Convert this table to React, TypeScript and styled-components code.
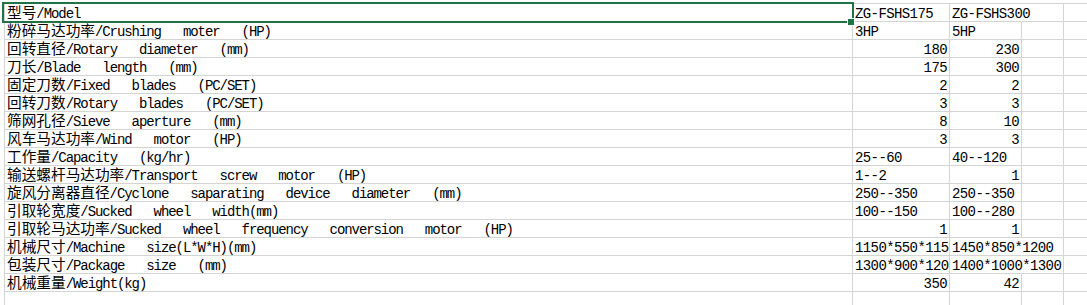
import React from "react";
import styled, { createGlobalStyle } from "styled-components";

const GRID = "#d4d4d4";
const EXCEL_GREEN = "#217346";

const GlobalStyle = createGlobalStyle`
  html, body {
    margin: 0;
    padding: 0;
    background: #ffffff;
    overflow: hidden;
  }
`;

type Align = "left" | "right";

interface SpecRow {
  cn: string;
  en: string;
  a: string;
  b: string;
  alignA?: Align;
  alignB?: Align;
}

const rows: SpecRow[] = [
  { cn: "型号", en: "/Model", a: "ZG-FSHS175", b: "ZG-FSHS300" },
  { cn: "粉碎马达功率", en: "/Crushing   moter   (HP)", a: "3HP", b: "5HP" },
  { cn: "回转直径", en: "/Rotary   diameter   (mm)", a: "180", b: "230", alignA: "right", alignB: "right" },
  { cn: "刀长", en: "/Blade   length   (mm)", a: "175", b: "300", alignA: "right", alignB: "right" },
  { cn: "固定刀数", en: "/Fixed   blades   (PC/SET)", a: "2", b: "2", alignA: "right", alignB: "right" },
  { cn: "回转刀数", en: "/Rotary   blades   (PC/SET)", a: "3", b: "3", alignA: "right", alignB: "right" },
  { cn: "筛网孔径", en: "/Sieve   aperture   (mm)", a: "8", b: "10", alignA: "right", alignB: "right" },
  { cn: "风车马达功率", en: "/Wind   motor   (HP)", a: "3", b: "3", alignA: "right", alignB: "right" },
  { cn: "工作量", en: "/Capacity   (kg/hr)", a: "25--60", b: "40--120" },
  { cn: "输送螺杆马达功率", en: "/Transport   screw   motor   (HP)", a: "1--2", b: "1", alignB: "right" },
  { cn: "旋风分离器直径", en: "/Cyclone   saparating   device   diameter   (mm)", a: "250--350", b: "250--350" },
  { cn: "引取轮宽度", en: "/Sucked   wheel   width(mm)", a: "100--150", b: "100--280" },
  {
    cn: "引取轮马达功率",
    en: "/Sucked   wheel   frequency   conversion   motor   (HP)",
    a: "1",
    b: "1",
    alignA: "right",
    alignB: "right",
  },
  { cn: "机械尺寸", en: "/Machine   size(L*W*H)(mm)", a: "1150*550*1150", b: "1450*850*1200" },
  { cn: "包装尺寸", en: "/Package   size   (mm)", a: "1300*900*1200", b: "1400*1000*1300" },
  { cn: "机械重量", en: "/Weight(kg)", a: "350", b: "42", alignA: "right", alignB: "right" },
];

const Page = styled.div`
  padding: 3px 0 0 4px;
  width: 1083px;
  height: 302px;
  overflow: hidden;
`;

const Sheet = styled.div`
  display: grid;
  grid-template-columns: 848px 97px 72px 42px 80px;
  grid-auto-rows: 18px;
  border-top: 1px solid ${GRID};
  border-left: 1px solid ${GRID};
  width: max-content;
`;

// spill: text runs on into the empty cell to the right, as Excel does
const Cell = styled.div<{ $align?: Align; $spill?: boolean; $value?: boolean }>`
  position: relative;
  box-sizing: border-box;
  border-right: 1px solid ${({ $spill }) => ($spill ? "transparent" : GRID)};
  border-bottom: 1px solid ${GRID};
  padding: 2px 2px 0 2px;
  overflow: ${({ $spill }) => ($spill ? "visible" : "hidden")};
  text-align: ${({ $align }) => $align || "left"};
  white-space: pre;
  color: #000000;
  line-height: 17px;
  font-family: "Liberation Mono", "Noto Sans CJK SC", monospace;
  font-size: 14px;
  letter-spacing: ${({ $value }) => ($value ? "-0.6px" : "-1.07px")};
`;

const Selection = styled.div`
  position: absolute;
  left: -3px;
  top: -2px;
  width: 852px;
  height: 21px;
  box-sizing: border-box;
  border: 2px solid ${EXCEL_GREEN};
  pointer-events: none;
  z-index: 2;
`;

const FillHandle = styled.div`
  position: absolute;
  left: 843px;
  top: 15px;
  width: 6px;
  height: 6px;
  background: ${EXCEL_GREEN};
  box-shadow: 0 0 0 1px #ffffff;
  z-index: 3;
`;

const Cn = styled.span`
  font-family: "Noto Sans CJK SC", sans-serif;
  font-size: 14.67px;
  line-height: 10px;
  letter-spacing: 0;
`;

const App: React.FC = () => {
  return (
    <Page>
      <GlobalStyle />
      <Sheet>
        {rows.map((row, i) => {
          const spillB = row.alignB !== "right" && row.b.length > 9;
          return (
            <React.Fragment key={row.cn}>
              <Cell $spill={i === 0}>
                <Cn>{row.cn}</Cn>
                {row.en}
                {i === 0 && (
                  <>
                    <Selection />
                    <FillHandle />
                  </>
                )}
              </Cell>
              <Cell $value $align={row.alignA}>
                {row.a}
              </Cell>
              <Cell $value $align={row.alignB} $spill={spillB}>
                {row.b}
              </Cell>
              <Cell />
              <Cell />
            </React.Fragment>
          );
        })}
        <Cell />
        <Cell />
        <Cell />
        <Cell />
        <Cell />
      </Sheet>
    </Page>
  );
};

export default App;
